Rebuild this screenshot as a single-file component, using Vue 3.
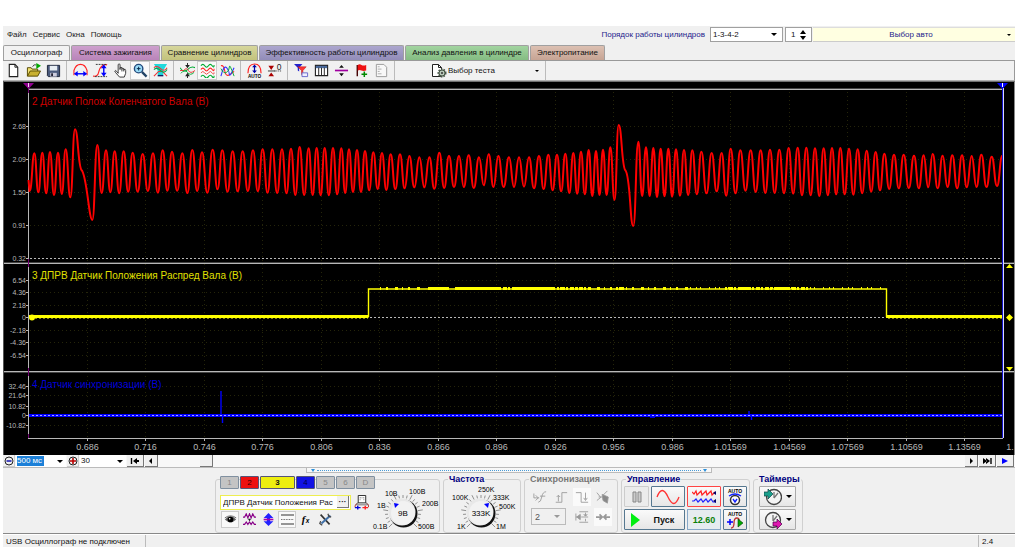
<script setup>
import { ref } from 'vue'

const menu = ['Файл', 'Сервис', 'Окна', 'Помощь']

const tabs = [
  { name: 'Осциллограф', tone: 'plain' },
  { name: 'Система зажигания', tone: 'violet' },
  { name: 'Сравнение цилиндров', tone: 'olive' },
  { name: 'Эффективность работы цилиндров', tone: 'blue' },
  { name: 'Анализ давления в цилиндре', tone: 'green' },
  { name: 'Электропитание', tone: 'brown' }
]

const waves = (c1, c2, c3) =>
  `<g fill="none" stroke-width="1.2"><path stroke="${c1}" d="M1 3Q3 0 5 3T9 3T13 3T15 2"/><path stroke="${c2}" d="M1 7Q3 4 5 7T9 7T13 7T15 6"/><path stroke="${c3}" d="M1 14.500Q3 11.500 5 14.500T9 14.500T13 14.500T15 13.500"/></g>`

const tools = [
  [
    { label: 'Новый', art: '<path d="M3.5 1.5h6l3 3v10h-9z" fill="#fff" stroke="#222" stroke-width="1.2"/><path d="M9.500 1.500v3h3" fill="none" stroke="#222"/>' },
    { label: 'Открыть', art: '<path d="M1.500 14V5h4l1 1.500h6V9" fill="#f0e070" stroke="#554800"/><path d="M1.500 14l3-5.500h11l-3 5.500z" fill="#c8b030" stroke="#554800"/><path d="M11 0l5 3-5 3.500z" fill="#0a0"/><path d="M7 4q1-3 4-2" fill="none" stroke="#444"/>' },
    { label: 'Сохранить', art: '<path d="M1.500 2.500h13v12h-12l-1-1z" fill="#4a5a7c" stroke="#1c2438"/><path d="M4 3h8v5H4z" fill="#e8eef4"/><path d="M4.500 10.500h7v4h-7z" fill="#ccd" /><path d="M5.500 11h2v3h-2z" fill="#223"/>' }
  ],
  [
    { label: 'Период', art: '<path d="M1 13V8Q3 1.500 8 1.500T15 8v5" fill="none" stroke="#f22" stroke-width="1.200"/><path d="M2 11.500h12" stroke="#00f" stroke-width="1.500"/><path d="M1 11.500l4-3v6zM15 11.500l-4-3v6z" fill="#00f"/>' },
    { label: 'Амплитуда', art: '<path d="M0 14q5 1 6-4T10 3t5-1" fill="none" stroke="#f22" stroke-width="1.200"/><path d="M3 1.500h12M2 14.500h13" stroke="#333" stroke-dasharray="2 1"/><path d="M11.500 3v10" stroke="#00f" stroke-width="1.500"/><path d="M11.500 1.500l3 4h-6zM11.500 14.500l3-4h-6z" fill="#00f"/>' },
    { label: 'Рука', art: '<path d="M5.500 9V2q0-1 1-1t1 1v5V5q1-1 2 0v2-1q1-1 2 0v2-1q2-1 2 1v3l-1.500 4h-5L3 10.500Q1 8 2.500 8q1 0 3 3z" fill="#fff" stroke="#333"/><path d="M9.500 7v2M11.500 8v1" stroke="#333"/>' },
    { label: 'Лупа', pressed: true, art: '<circle cx="6" cy="6" r="4.500" fill="#9adcf8" stroke="#234a7c" stroke-width="1.500"/><path d="M6 4v4M4 6h4" stroke="#024"/><path d="M9.500 9.500l5 5" stroke="#246" stroke-width="2.400"/>' },
    { label: 'Маркеры', art: '<path d="M1 1h14L11 8v5H5V8z" fill="#20d8dc"/><path d="M1 5q3-3 7 1t7-1M1 14l5-5h4l5 5" fill="none" stroke="#e33" stroke-width="1.200"/><path d="M1 7q3-3 7 1t7-1" fill="none" stroke="#0a5" stroke-width="1.200"/><path d="M5 13.500h6" stroke="#126" stroke-width="1.500"/>' }
  ],
  [
    { label: 'Сжать графики', art: '<path d="M0 5q4 6 8 2t8-2" fill="none" stroke="#0a3" stroke-width="1.100"/><path d="M0 8h4q3-4 5 0t7 0" fill="none" stroke="#e33"/><path d="M1 11q4-5 7-1t7 0" fill="none" stroke="#0a3"/><path d="M8 5.500L5.500 2h5zM8 10.500L5.500 14h5z" fill="#222"/><path d="M8 0v3M8 13v3" stroke="#222"/>' },
    { label: 'Разнести графики', pressed: true, art: waves('#0a3', '#f22', '#0a3') + '<path d="M1 10.500Q3 7.500 5 10.500T9 10.500T13 10.500T15 10" fill="none" stroke="#e44"/>' },
    { label: 'Наложить графики', art: '<path d="M1 3q3-1 4 5t4 5 6-4" fill="none" stroke="#f22" stroke-width="1.200"/><path d="M1 14Q4 2 7 5t3 7 5-7" fill="none" stroke="#33f" stroke-width="1.200"/><path d="M1 6q3 6 6 4t3-6 5 10" fill="none" stroke="#0a3"/>' }
  ],
  [
    { label: 'Авто', art: '<path d="M1 11Q1 1 8 1t7 10" fill="none" stroke="#f22" stroke-width="1.200"/><path d="M8 4v5" stroke="#00a" stroke-width="1.300"/><path d="M8 1.500l2.500 3h-5zM8 11l2.500-3h-5z" fill="#00a"/><text x="8" y="16" text-anchor="middle" font-size="5" font-weight="bold" fill="#000">AUTO</text>' },
    { label: 'Ноль', art: '<path d="M1 8.500h8" stroke="#333"/><path d="M4.500 7.500L1.500 3h6zM4.500 10L1.500 14h6z" fill="#a00"/><path d="M8 8.500h8" stroke="#333" stroke-dasharray="1 1"/><text x="10.500" y="7" font-size="9" fill="#222">0</text>' }
  ],
  [
    { label: 'Фильтр', art: '<path d="M0 1h9L5.500 5v4L4 8V5z" fill="#22c"/><path d="M4 4h9L9.500 8v6L8 12V8z" fill="#f33" stroke="#a11" stroke-width=".5"/><path d="M8.500 10.500h6v4h-6z" fill="#eef" stroke="#66c"/>' },
    { label: 'Таблица', art: '<path d="M1.500 2.500h13v11h-13z" fill="#fff" stroke="#222" stroke-width="1.200"/><path d="M2 3h12v2.500H2z" fill="#4a6a9c"/><path d="M5 5v8M8 5v8M11 5v8" stroke="#222"/>' },
    { label: 'Разделить', art: '<path d="M1 8h14" stroke="#a000a0" stroke-width="1.800"/><path d="M8 2l2.500 3h-5zM8 14l2.500-3h-5z" fill="#111"/>' },
    { label: 'Флажок', art: '<path d="M3.500 2v12" stroke="#400" stroke-width="1.500"/><path d="M4 2q2-1.500 4 0t5 0v6q-3 1-5 0T4 8z" fill="#e11"/><path d="M11 9v6M8 12h6" stroke="#080" stroke-width="1.600"/>' },
    { label: 'Отчёт', art: '<path d="M2.500 1.500h8l3 3v10h-11z" fill="#f8f8f8" stroke="#999"/><path d="M4 4h2M4 6.500h4M4 9h2M4 11.500h4" stroke="#aaa"/>' }
  ]
]

// Crankshaft signal: [x, crest, trough] in third-pixels, per stretch of the time axis
const stretches = [
  { from: 0, x: [103,127,150,174,197,225,292,318,344,371,398,428,459,488,516,547,577,606,638,667,698,728,759,788,817,846,873,899,926,950,974,999],
    hi: [220,218,216,218,208,148,195,211,214,214,218,222,220,211,215,220,210,217,209,211,214,214,211,208,208,208,206,201,205,204,204,204],
    lo: [337,340,345,342,352,420,339,337,340,335,335,333,338,332,332,339,333,338,328,335,334,333,334,338,339,340,345,345,345,346,346,343] },
  { from: 1020, x: [4,27,51,75,100,126,152,180,208,238,268,298,327,357,386,417,446,475,507,537,567,597,625,651,676,700,723,746,768,789,811,836,895,918,940,962,985,1008],
    hi: [205,208,210,213,217,219,223,223,228,232,232,218,228,228,226,232,223,228,232,232,232,228,224,224,221,219,215,210,213,209,202,135,185,202,204,206,206,208],
    lo: [339,336,336,331,327,330,327,325,322,322,326,324,321,321,324,316,321,321,321,320,325,327,331,334,339,341,343,348,345,345,360,438,348,348,351,349,350,347] },
  { from: 2040, x: [12,37,64,95,125,152,181,212,242,270,298,326,353,379,405,431,456,481,507,533,560,587,613,642,671,702,731,758,788,817,846,875,904,935,967],
    hi: [210,211,215,219,219,206,211,211,211,209,209,204,203,203,205,205,204,204,206,208,212,216,221,224,224,227,226,222,227,226,226,228,224,230,227],
    lo: [345,343,340,334,347,340,332,336,339,339,340,341,346,346,348,346,343,343,344,340,335,331,327,325,324,325,322,325,321,325,322,321,321,318,318] }
]
const teeth = stretches.flatMap(s => s.x.map((x, i) => [(s.from + x) / 3, 80 + s.hi[i] / 3, 80 + s.lo[i] / 3]))

function crankPath() {
  let d = 'M28.500 180 L29.500 191 '
  let px = 30
  let py = 191.5
  const curve = (x, y) => {
    const m = (px + x) / 2
    d += `C${m} ${py} ${m} ${y} ${x} ${y} `
    px = x
    py = y
  }
  teeth.forEach(([x, hi, lo], i) => {
    curve(x, hi)
    const next = teeth[i + 1]
    if (!next) return
    if (lo - hi > 85) {
      d += `C${x + 3} ${hi} ${x + 3} 166 ${x + 6.5} 170 C${x + 12} 175 ${next[0] - 8.5} ${lo} ${next[0] - 5} ${lo} `
      px = next[0] - 5
      py = lo
    } else curve((x + next[0]) / 2, lo)
  })
  return d
}
const crank = crankPath()

const timeLabels = ['0.686', '0.716', '0.746', '0.776', '0.806', '0.836', '0.866', '0.896', '0.926', '0.956', '0.986', '1.01569', '1.04569', '1.07569', '1.10569', '1.13569']
const times = timeLabels.map((t, i) => ({ t, x: Math.floor(87 + 58.5 * i) + 0.5 }))
const levels = [
  ['2.68', 126.5], ['2.09', 159.5], ['1.50', 192.5], ['0.91', 225.5], ['0.32', 258.5],
  ['6.54', 280.5], ['4.36', 292.5], ['2.18', 305.5], ['0', 317.5], ['-2.18', 330.5], ['-4.36', 342.5], ['-6.54', 355.5],
  ['32.46', 386.5], ['21.64', 395.5], ['10.82', 406.5], ['0', 415.5], ['-10.82', 425.5]
]

const channels = [
  { n: '1', c: 'off' }, { n: '2', c: 'red' }, { n: '3', c: 'yellow' }, { n: '4', c: 'navy' },
  { n: '5', c: 'off' }, { n: '6', c: 'off' }, { n: 'D', c: 'off' }
]
const channelTools = [
  { label: 'Видимость', pressed: true, art: '<path d="M1 8q7-8 14 0-7 7-14 0z" fill="#666"/><circle cx="8" cy="8" r="3.500" fill="#000"/><circle cx="7" cy="7" r="1" fill="#fff"/><path d="M1 6q7-5 14 0" fill="none" stroke="#555"/>' },
  { label: 'Масштаб', art: '<path d="M0 5h2l2-4 2 5 2-5 2 5 2-5 2 4h2M0 14h2l2-3 2 3 2-3 2 3 2-3 2 3h2" fill="none" stroke="#808" stroke-width="1.400"/><path d="M8 10L6 7h4z" fill="#222"/>' },
  { label: 'Сдвиг', art: '<path d="M8 0l6 6h-4v4h4l-6 6-6-6h4V6H2z" fill="#22f"/><path d="M2 8h12" stroke="#a0a" stroke-width="2"/>' },
  { label: 'Линии', pressed: true, art: '<path d="M0 2.500h16M0 13.500h16" stroke="#333" stroke-width="1.300"/><path d="M0 8h16" stroke="#333" stroke-dasharray="1 1"/>' },
  { label: 'Функция', art: '<text x="2" y="12" font-size="13" font-style="italic" font-weight="bold" font-family="Liberation Serif, serif" fill="#000">f</text><text x="7" y="12" font-size="8" font-style="italic" font-weight="bold" fill="#000">x</text>' },
  { label: 'Настройки', art: '<path d="M2 2l11 12" stroke="#333" stroke-width="2"/><path d="M14 3L3 13" stroke="#4070a8" stroke-width="2.500"/><path d="M11 1l1 3 3 1M2 10l-1 3 3 2" fill="none" stroke="#444" stroke-width="1.500"/>' }
]

const ticks = cx => Array.from({ length: 21 }, (_, i) => {
  const a = ((135 + i * 13.5) * Math.PI) / 180
  const r = i % 4 === 0 ? 20 : 18
  return { x1: cx + 15 * Math.cos(a), y1: 513 + 15 * Math.sin(a), x2: cx + r * Math.cos(a), y2: 513 + r * Math.sin(a) }
})
const voltLabels = [['0.1В', 371, 529], ['1В', 375, 508], ['10В', 383, 496], ['100В', 407, 494], ['200В', 420, 506], ['500В', 416, 529]]
const rateLabels = [['1K', 455, 529], ['100K', 450, 500], ['250K', 476, 492], ['333K', 491, 500], ['500K', 497, 509], ['1M', 494, 529]]

const order = ref('1-3-4-2')
const cylinder = ref('1')
const span = ref('500 мс')
const step = ref('30')
const syncChannel = ref('2')
const channelName = ref('ДПРВ Датчик Положения Рас')
</script>

<template>
  <main class="window">
    <header class="top">
      <nav class="menu"><a v-for="m in menu" :key="m" href="#">{{ m }}</a></nav>
      <label class="order-label" for="order">Порядок работы цилиндров</label>
      <span class="combo order">
        <select id="order" v-model="order"><option>1-3-4-2</option><option>1-2-4-3</option></select>
        <svg class="arrow" viewBox="0 0 6 3"><path d="M0 0h6L3 3z" /></svg>
      </span>
      <span class="combo spin">
        <input v-model="cylinder" aria-label="Цилиндр">
        <svg viewBox="0 0 6 10"><path d="M3 0l3 4H0zM3 10l3-4H0z" /></svg>
      </span>
      <button class="car">Выбор авто<svg class="small-arrow" viewBox="0 0 4 2"><path d="M0 0h4L2 2z" /></svg></button>
    </header>

    <div class="tabs" role="tablist">
      <button v-for="(t, i) in tabs" :key="t.name" role="tab" :aria-selected="i === 0" :class="['tab', t.tone]">{{ t.name }}</button>
    </div>

    <div class="toolbar">
      <div v-for="(g, i) in tools" :key="i" class="tool-group">
        <button v-for="t in g" :key="t.label" :aria-label="t.label" :class="['tool', { pressed: t.pressed }]">
          <svg viewBox="0 0 16 16" v-html="t.art" />
        </button>
      </div>
      <button class="test">
        <svg class="test-icon" viewBox="0 0 16 14"><path d="M1.500 .5h6l3 3v9h-9z" fill="#fff" stroke="#222" /><path d="M7.500 .5v3h3" fill="none" stroke="#222" /><circle cx="11" cy="9" r="3.500" fill="#bcc8bc" stroke="#465446" stroke-width="2" stroke-dasharray="1.500 1" /><circle cx="11" cy="9" r="3" fill="#b8c8b8" stroke="#465446" /><circle cx="11" cy="9" r="1" fill="#333" /></svg>
        <span>Выбор теста</span>
        <svg class="small-arrow" viewBox="0 0 4 2"><path d="M0 0h4L2 2z" /></svg>
      </button>
    </div>

    <svg class="plot" viewBox="3 81 1012 374" role="img" aria-label="Осциллограммы">
      <rect x="3" y="81" width="1012" height="374" fill="#000" />
      <g class="grid">
        <line v-for="t in times" :key="t.t" :x1="t.x" :x2="t.x" y1="92" y2="438" />
        <line v-for="(l, i) in levels" :key="i" x1="30" x2="1002" :y1="l[1]" :y2="l[1]" />
      </g>
      <g class="frame">
        <path d="M28 89.500H1003M3 263.500H1014M3 371.500H1014M28 438.500H1003" />
        <path class="dim" d="M28 88.500H1003M3 262.500H1014M3 372.500H1014" />
        <path d="M28.500 89V438" />
        <path v-for="(l, i) in levels" :key="i" :d="`M26 ${l[1]}h3`" />
        <path v-for="t in times" :key="t.t" :d="`M${t.x} 438v3`" />
      </g>
      <path d="M28.500 88v5M28.500 259v8M28.500 368v8M28.500 434v4" stroke="#700070" />

      <text class="title" x="32" y="105" fill="#d00000">2 Датчик Полож Коленчатого Вала (В)</text>
      <text class="title" x="32" y="279" fill="#e0e000">3 ДПРВ Датчик Положения Распред Вала (В)</text>
      <text class="title" x="32" y="388" fill="#0000d8">4 Датчик синхронизации (В)</text>

      <path class="zero" d="M30 258.500H1003" />
      <path class="zero" d="M30 317.500H1003" />
      <path :d="crank" fill="none" stroke="#f00" stroke-width="2" />

      <g fill="none" stroke="#ff0">
        <path d="M29 316.500H368.500M886 316.500H1002" stroke-width="3" />
        <path d="M368.500 317V289H886.500V317" stroke-width="1.400" />
        <path d="M380 288.500H420M560 288.500H690" stroke-width="3" stroke-dasharray="1 5 2 7 3 4" />
        <path d="M428 288.500h21M455 288.500h44M516 288.500h39M740 288.500h11M775 288.500h15" stroke-width="3" />
        <path d="M499 288.500h17M557 288.500h34M616 288.500h8M725 288.500h84" stroke-width="3" stroke-dasharray="2 2 4 1" />
        <path d="M690 288H885" stroke-width="2" stroke-dasharray="1 5 1 3 1 8" />
      </g>
      <path class="overlay" d="M35 318.500H368M888 318.500H1002" />
      <circle cx="32" cy="317.500" r="3" fill="#ff0" />

      <path d="M29 415.500H1002" stroke="#00f" stroke-width="3" />
      <path d="M221 415V391M222.500 415V423M749 411V416M751.500 416V420M650 417h5" stroke="#00f" stroke-width="1.400" />
      <path class="zero faint" d="M32 415.500H1002" />

      <g class="values"><text v-for="(l, i) in levels" :key="i" x="26" :y="l[1] + 2.500">{{ l[0] }}</text></g>
      <g class="times"><text v-for="t in times" :key="t.t" :x="t.x" y="450">{{ t.t }}</text><text x="1010" y="450">1.</text></g>

      <path d="M1002.500 85V438" stroke="#11c" />
      <path d="M1003.500 88V438" stroke="#d8d8ff" />
      <path d="M23 83h11l-5.500 6z" fill="#900090" />
      <path d="M28.500 83v4" stroke="#f0d8f0" />
      <path d="M997 83h11l-5.500 6z" fill="#00f" />
      <path d="M1002.500 83v4" stroke="#fff" />
      <path d="M1006 268h7l-3.500-4zM1006 367h7l-3.500 4zM1006 317.500l3.500-3.500 3.500 3.500-3.500 3.500z" fill="#ff0" />
      <path d="M1014.500 81V455" stroke="#888" />
      <path d="M3 81.500H1015" stroke="#707070" />
      <path d="M3.500 81V455" stroke="#555" />
    </svg>

    <div class="scroll">
      <button class="sq round-btn" aria-label="Уменьшить"><svg viewBox="0 0 10 10"><circle cx="5" cy="5" r="4" fill="none" stroke="#222" /><path d="M2.500 5h5" stroke="#00a" stroke-width="1.400" /></svg></button>
      <span class="flat span-box"><input v-model="span" class="picked" aria-label="Развёртка"><svg class="arrow" viewBox="0 0 6 3"><path d="M0 0h6L3 3z" /></svg></span>
      <button class="sq round-btn" aria-label="Увеличить"><svg viewBox="0 0 10 10"><circle cx="5" cy="5" r="4" fill="none" stroke="#222" /><path d="M2 5h6M5 2v6" stroke="#b00" stroke-width="1.600" /></svg></button>
      <span class="flat step-box"><select v-model="step" aria-label="Шаг"><option>30</option><option>60</option></select><svg class="arrow" viewBox="0 0 6 3"><path d="M0 0h6L3 3z" /></svg></span>
      <button class="sq wide" aria-label="В начало"><svg viewBox="0 0 10 8"><path d="M1.500 1v6" stroke="#000" stroke-width="1.400" /><path d="M3 4l4-3v6zM6 3h3v2H6z" /></svg></button>
      <button class="sq" aria-label="Назад"><svg viewBox="0 0 10 8"><path d="M3 4l3-3v6z" /></svg></button>
      <button class="sq thumb" aria-label="Позиция" />
      <button class="sq" aria-label="Вперёд"><svg viewBox="0 0 10 8"><path d="M7 4L4 1v6z" /></svg></button>
      <button class="sq wide" aria-label="В конец"><svg viewBox="0 0 10 8"><path d="M9 1v6" stroke="#000" stroke-width="1.400" /><path d="M8 4L4 1v6zM1 1l4 3-4 3z" /></svg></button>
      <button class="sq wide" aria-label="Воспроизвести"><svg viewBox="0 0 10 8"><path d="M8 4L2 1v6z" fill="#00f" /></svg></button>
    </div>

    <section class="panel">
      <div class="splitter"><i /><b /><i /></div>
      <div class="groups">
        <div class="box channel-box">
          <div class="channel-left">
            <div class="channels"><button v-for="c in channels" :key="c.n" :class="['ch', c.c]">{{ c.n }}</button></div>
            <div class="name-row">
              <span class="name"><input v-model="channelName" aria-label="Датчик"><button aria-label="Выбрать датчик">···</button></span>
              <button class="bare" aria-label="Обмен"><svg viewBox="0 0 16 16"><path d="M4.500 .5h8v8h-8z" fill="#fff" stroke="#222" /><path d="M6 3h2M9 3h2M6 5h1M10 5h1" stroke="#888" /><path d="M3.500 8.500h10l1 2h-12z" fill="#ddd" stroke="#444" stroke-width=".7" /><path d="M3 9q-2 1-2 4M14 9q2 1 1.500 4" fill="none" stroke="#a33" /><path d="M1 13.500h6M4 11.500v4" stroke="#00d" stroke-width="1.500" /><path d="M9 13.500h6M12 11.500v4" fill="none" stroke="#f22" stroke-width="1.500" /></svg></button>
            </div>
            <div class="channel-tools">
              <button v-for="t in channelTools" :key="t.label" :aria-label="t.label" :class="{ pressed: t.pressed }"><svg viewBox="0 0 16 16" v-html="t.art" /></button>
            </div>
          </div>
          <svg class="knob" viewBox="370 482 68 50" role="img" aria-label="Чувствительность 9В">
            <line v-for="(t, i) in ticks(401)" :key="i" v-bind="t" stroke="#777" stroke-width=".8" />
            <circle cx="401.5" cy="513.5" r="14" fill="#111" /><circle cx="400" cy="512" r="13.500" fill="#e8e8e8" />
            <circle cx="401" cy="513" r="12" fill="#f2f2f2" />
            <path d="M392 503l5 1-4 4z" fill="#00f" />
            <text class="reading" x="401" y="516">9В</text>
            <text v-for="l in voltLabels" :key="l[0]" :x="l[1]" :y="l[2]">{{ l[0] }}</text>
          </svg>
        </div>

        <fieldset class="rate">
          <legend>Частота</legend>
          <svg class="knob" viewBox="446 484 68 48" role="img" aria-label="Частота 333K">
            <line v-for="(t, i) in ticks(479)" :key="i" v-bind="t" stroke="#777" stroke-width=".8" />
            <circle cx="479.5" cy="513.5" r="14" fill="#111" /><circle cx="478" cy="512" r="13.500" fill="#e8e8e8" />
            <circle cx="479" cy="513" r="12" fill="#f2f2f2" />
            <path d="M487 503l-5 1 4 4z" fill="#00f" />
            <text class="reading" x="479" y="516">333K</text>
            <text v-for="l in rateLabels" :key="l[0]" :x="l[1]" :y="l[2]">{{ l[0] }}</text>
          </svg>
        </fieldset>

        <fieldset class="sync">
          <legend class="muted">Синхронизация</legend>
          <div class="sync-grid">
            <button disabled aria-label="Уровень"><svg viewBox="0 0 16 16"><path d="M1 4v5M1 9h6M3 6l3 3-3 3M6 14q3 0 4-6t5-6M8 7h6" /></svg></button>
            <button disabled aria-label="Фронт"><svg viewBox="0 0 16 16"><path d="M2 14h7V3h6M5 6v7M3 8l2-2 2 2" /></svg></button>
            <button disabled class="lit" aria-label="Спад"><svg viewBox="0 0 16 16"><path d="M1 3h6v11h8M12 3v8M10 9l2 3 2-3" /></svg></button>
            <button disabled aria-label="Ручная"><svg viewBox="0 0 16 16"><path d="M1 3l4 5M1 12l5-4M3 8h5M8 6l5-5" /><path d="M7 5l7 3-1 7-5-3z" fill="#888" /></svg></button>
            <span class="combo sync-combo"><select v-model="syncChannel" disabled aria-label="Канал"><option>2</option></select><svg class="arrow" viewBox="0 0 6 3"><path d="M0 0h6L3 3z" fill="#999" stroke="none" /></svg></span>
            <button disabled aria-label="Смещение"><svg viewBox="0 0 16 16"><path d="M1 4v8M1 8h5M5 2h10M5 14h10M7 8h8" /><path d="M2 8l4-3v6zM12 3v3M10 5l2 2 2-2M12 13v-3" fill="#999" /></svg></button>
            <button disabled class="lit" aria-label="Сжать"><svg viewBox="0 0 16 16"><path d="M0 8h7M16 8H9M4 5l3 3-3 3M12 5L9 8l3 3" stroke-width="2" /></svg></button>
          </div>
        </fieldset>

        <fieldset class="control">
          <legend>Управление</legend>
          <div class="control-grid">
            <button disabled class="soft" aria-label="Пауза"><svg viewBox="0 0 16 16"><path d="M4 3h3v10H4zM9 3h3v10H9z" fill="#ccc" stroke="#888" /></svg></button>
            <button aria-label="Сигнал"><svg class="long" viewBox="0 0 24 16"><path d="M1 8Q6-5 12 8t11 0" fill="none" stroke="#f33" stroke-width="1.300" /></svg></button>
            <button class="alert" aria-label="Каналы"><svg class="long" viewBox="0 0 24 16"><path d="M0 3l2 2 2-3 1 4 4-4 1 4 4-4 1 4 4-4 1 4 3-3" fill="none" stroke="#f22" stroke-width="1.200" /><path d="M0 12h2l2-2 2 3 3-3 2 3 3-3 2 3 3-3 2 3h3" fill="none" stroke="#22f" stroke-width="1.200" /><path d="M24 2v4l-3-2zM24 10v4l-3-2z" fill="#006" /></svg></button>
            <button aria-label="Авто предел"><svg class="tall" viewBox="0 0 16 18"><text x="8" y="5" text-anchor="middle" font-size="5" font-weight="bold">AUTO</text><circle cx="8" cy="12" r="4.500" fill="#fff" stroke="#333" stroke-width="1.500" /><path d="M2 8q6-4 12 0M6 11l2 3 2-3" fill="none" stroke="#12f" stroke-width="1.400" /></svg></button>
            <button class="start"><svg viewBox="0 0 9 14"><path d="M0 0l9 7-9 7z" fill="#0e1" /></svg>Пуск</button>
            <output>12.60</output>
            <button aria-label="Авто пуск"><svg class="tall" viewBox="0 0 16 18"><text x="8" y="5" text-anchor="middle" font-size="5" font-weight="bold">AUTO</text><path d="M4 17q3 0 3-5t3-5 2 5" fill="none" stroke="#b33" stroke-width="1.300" /><path d="M0 11h6M3 8v6" stroke="#00f" stroke-width="1.500" /><path d="M11 8l5 4-5 4z" fill="#0a0" stroke="#040" stroke-width=".6" /></svg></button>
          </div>
        </fieldset>

        <fieldset class="timers">
          <legend>Таймеры</legend>
          <div class="timer-col">
            <button aria-label="Таймер пуска"><svg class="clock" viewBox="0 0 18 18"><circle cx="10" cy="9" r="7.500" fill="#f4f4f4" stroke="#444" stroke-width="1.300" /><path d="M10 10V4M10 10l4-5" stroke="#777" stroke-width="1.300" /><path d="M0 4h4V1l5 5-5 5V8H0z" fill="#19a08c" stroke="#144" stroke-width=".7" /></svg><svg class="arrow" viewBox="0 0 6 3"><path d="M0 0h6L3 3z" /></svg></button>
            <button aria-label="Таймер остановки"><svg class="clock" viewBox="0 0 18 18"><circle cx="9" cy="9" r="7.500" fill="#f4f4f4" stroke="#444" stroke-width="1.300" /><path d="M9 10V4M9 10l4-5" stroke="#777" stroke-width="1.300" /><path d="M9 11h4V8l5 5-5 5v-3H9z" fill="#e018b0" stroke="#404" stroke-width=".7" /></svg><svg class="arrow" viewBox="0 0 6 3"><path d="M0 0h6L3 3z" /></svg></button>
          </div>
        </fieldset>
      </div>
    </section>

    <footer class="status">
      <span class="state">USB Осциллограф не подключен</span>
      <span class="version">2.4</span>
    </footer>
  </main>
</template>

<style>
body { background: #fff; }
</style>

<style scoped>
.window { padding: 26px 9px 4px 3px; font: 8px/10px "Liberation Sans", Arial, sans-serif; color: #111; }
.window * { box-sizing: border-box; }
button, input, select { font: inherit; color: inherit; margin: 0; padding: 0; border: 0; border-radius: 0; background: none; appearance: none; outline: 0; min-width: 0; }
svg { display: block; flex: none; }
.arrow { width: 6px; height: 3px; pointer-events: none; }
.small-arrow { width: 4px; height: 2px; }

.top { display: flex; align-items: center; height: 19px; padding-bottom: 2px; background: #f0f0f0; }
.menu { display: flex; gap: 6px; padding-left: 4px; }
.menu a { color: #222; text-decoration: none; }
.order-label { margin-left: auto; margin-right: 5px; color: #1c1c8c; }
.combo { display: flex; align-items: center; height: 15px; padding: 0 5px 0 2px; border: 1px solid #a0a0a0; background: #fff; }
.combo select, .combo input { flex: 1; width: 100%; }
.order { width: 73px; margin-right: 2px; }
.spin { width: 27px; margin-right: 1px; padding-left: 5px; }
.spin svg { width: 6px; height: 10px; }
.car { display: flex; align-items: center; justify-content: center; position: relative; width: 202px; height: 15px; background: #ffffe1; border-bottom: 1px solid #ccc; border-top: 1px solid #ddd; color: #1c1c8c; padding-right: 6px; }
.car .small-arrow { position: absolute; right: 4px; }

.tabs { display: flex; gap: 1px; height: 15px; background: #f0f0f0; }
.tab { height: 15px; padding: 0 5px; border: 1px solid #a0a0a0; border-bottom: 0; border-radius: 2px 2px 0 0; white-space: nowrap; }
.plain { flex: 0 0 67px; background: #f2f2f2; }
.violet { flex: 0 0 89px; background: linear-gradient(#cda0cd, #b984b9); }
.olive { flex: 0 0 97px; background: linear-gradient(#d6d69c, #c2c27c); }
.blue { flex: 0 0 145px; background: linear-gradient(#aca6ce, #928cb8); }
.green { flex: 0 0 124px; background: linear-gradient(#a2d4a0, #84bc82); }
.brown { flex: 0 0 75px; background: linear-gradient(#dcc0b2, #c6a494); }

.toolbar { display: flex; align-items: stretch; height: 21px; background: #f1f1f1; border-top: 1px solid #999; border-right: 1px solid #999; border-bottom: 1px solid #b0b0b0; }
.tool-group { display: flex; padding-right: 3px; margin-right: 3px; border-right: 1px solid #bbb; }
.tool { display: grid; place-items: center; width: 20px; }
.tool svg { width: 15px; height: 15px; }
.pressed { background: #f9f9f9; border: 1px solid #ccc; }
.test { display: flex; align-items: center; width: 148px; padding: 0 6px 0 33px; border-right: 1px solid #bbb; }
.test-icon { width: 16px; height: 14px; margin-right: 1px; }
.test .small-arrow { margin-left: auto; }

.plot { width: 100%; height: auto; }
.grid line { stroke: #25250a; stroke-dasharray: 1 3; }
.frame path { stroke: #b8b8b8; fill: none; }
.frame .dim { stroke: #444; }
.title { font-size: 10px; }
.zero { stroke: #b8b8b8; stroke-dasharray: 2 2; }
.faint { stroke: #a8a8ff; }
.overlay { stroke: #808018; stroke-dasharray: 2 2; }
.values { font-size: 7px; fill: #b8b8b8; text-anchor: end; }
.times { font-size: 9px; fill: #b8b8b8; text-anchor: middle; }

.scroll { display: flex; height: 13px; background: #f8f8f8; border-bottom: 1px solid #bbb; }
.sq { display: grid; place-items: center; width: 13px; height: 12px; margin-right: 1px; background: #f0f0f0; border-right: 1px solid #777; border-bottom: 1px solid #777; }
.sq svg { width: 10px; height: 8px; }
.round-btn { border-color: #ccc; width: 12px; }
.round-btn svg { height: 10px; }
.wide { width: 17px; }
.thumb { margin-left: 41px; margin-right: auto; }
.flat { display: flex; align-items: center; justify-content: space-between; background: #fff; padding-right: 3px; }
.span-box { width: 50px; margin-right: 1px; padding-left: 1px; }
.step-box { width: 46px; margin-right: 1px; padding-left: 1px; }
.picked { width: 27px; background: #1c80d8; color: #fff; }

.panel { height: 66px; background: #f0f0f0; border-bottom: 1px solid #888; }
.splitter { display: flex; align-items: center; width: 406px; height: 5px; margin: 0 auto; padding: 0 4px; border: 1px solid #bbb; border-top: 0; background: #f8f8f8; gap: 2px; }
.splitter b { flex: 1; border-top: 1px dotted #4a9cd8; }
.splitter i { border: 2px solid transparent; border-top: 3px solid #2a90dc; border-bottom: 0; }
.groups { display: flex; justify-content: center; align-items: flex-end; gap: 3px; padding-top: 2px; }
.box, fieldset { margin: 0; padding: 0; border: 1px solid #d0d0d0; border-radius: 3px; min-width: 0; }
fieldset { height: 58px; }
legend { height: 9px; margin-left: 4px; padding: 0 1px; font: bold 9px/9px "Liberation Sans", Arial, sans-serif; color: #000080; white-space: nowrap; }
.muted { color: #777; }
.channel-box { display: flex; width: 225px; height: 54px; padding-left: 4px; }
.channel-left { width: 152px; }
.channels { display: flex; gap: 1px; width: 156px; margin-top: -4px; }
.ch { flex: 0 0 19px; height: 13px; border: 1px solid #557; border-radius: 1px; }
.off { background: #c4c4c4; color: #888; border-color: #8090a0; }
.red { background: #ee1010; color: #300; }
.yellow { background: #eeee10; flex-basis: 35px; font-weight: bold; }
.navy { background: #1212e4; color: #004; }
.name-row { display: flex; align-items: center; gap: 3px; margin-top: 6px; }
.name { display: flex; flex: 0 0 131px; height: 15px; padding: 0 1px 0 2px; border: 1px solid #eeee50; background: #fff; }
.name input { flex: 1; }
.name button { width: 12px; height: 12px; border-right: 1px solid #777; border-bottom: 1px solid #777; background: #f0f0f0; font-weight: bold; }
.bare svg { width: 15px; height: 15px; }
.channel-tools { display: flex; gap: 1px; margin-top: 1px; padding-left: 1px; }
.channel-tools button { display: grid; place-items: center; width: 18px; height: 17px; }
.channel-tools svg { width: 13px; height: 13px; }
.knob { width: 68px; height: 48px; font-size: 7px; }
.channel-box .knob { height: 50px; margin-top: 2px; }
.reading { font-size: 8px; text-anchor: middle; }
.rate { width: 78px; }
.rate .knob { margin-left: 4px; }
.sync { width: 94px; }
.sync-grid { display: grid; grid-template-columns: repeat(4, 18px); gap: 2px 3px; padding: 4px 0 0 6px; }
.sync-grid button { display: grid; place-items: center; height: 18px; }
.sync-grid button svg { width: 14px; height: 14px; stroke: #999; fill: none; }
.lit { background: #fafafa; }
.sync-combo { grid-column: span 2; width: 35px; height: 17px; border-color: #bbb; background: #f0f0f0; color: #555; padding-left: 3px; }
.sync-combo select { font-size: 9px; opacity: 1; }
.control { width: 129px; }
.control-grid { display: grid; grid-template-columns: 25px 34px 34px 24px; grid-auto-rows: 21px; gap: 2px; padding: 2px 0 0 2px; }
.control-grid button, .timer-col button { display: flex; align-items: center; justify-content: center; border: 1px solid #567890; border-radius: 1px; background: linear-gradient(#fafafa, #e6e6e6); }
.control-grid .soft { border-color: #ccc; background: #ececec; }
.control-grid .alert { border-color: #f44; }
.control-grid svg { width: 16px; height: 16px; }
.control-grid .long { width: 24px; }
.control-grid .tall { height: 18px; }
.control-grid .start { grid-column: span 2; gap: 14px; padding-right: 4px; font: bold 9px/10px "Liberation Sans", Arial, sans-serif; }
.control-grid .start svg { width: 9px; height: 14px; }
output { display: grid; place-items: center; border: 1px solid #88a8c8; background: #e6ecf0; color: #0a800a; font: bold 9px/10px "Liberation Sans", Arial, sans-serif; }
.timers { width: 50px; }
.timer-col { display: grid; gap: 2px; grid-auto-rows: 21px; padding: 2px 6px 0 5px; }
.timer-col button { gap: 4px; border-color: #aaa; }
.clock { width: 18px; height: 18px; }

.status { display: flex; align-items: stretch; height: 13px; border-top: 1px solid #fff; background: #f0f0f0; line-height: 13px; }
.state { width: 143px; padding-left: 3px; border-right: 1px solid #bbb; }
.version { width: 37px; margin-left: auto; padding-left: 3px; border-left: 1px solid #bbb; }
</style>
